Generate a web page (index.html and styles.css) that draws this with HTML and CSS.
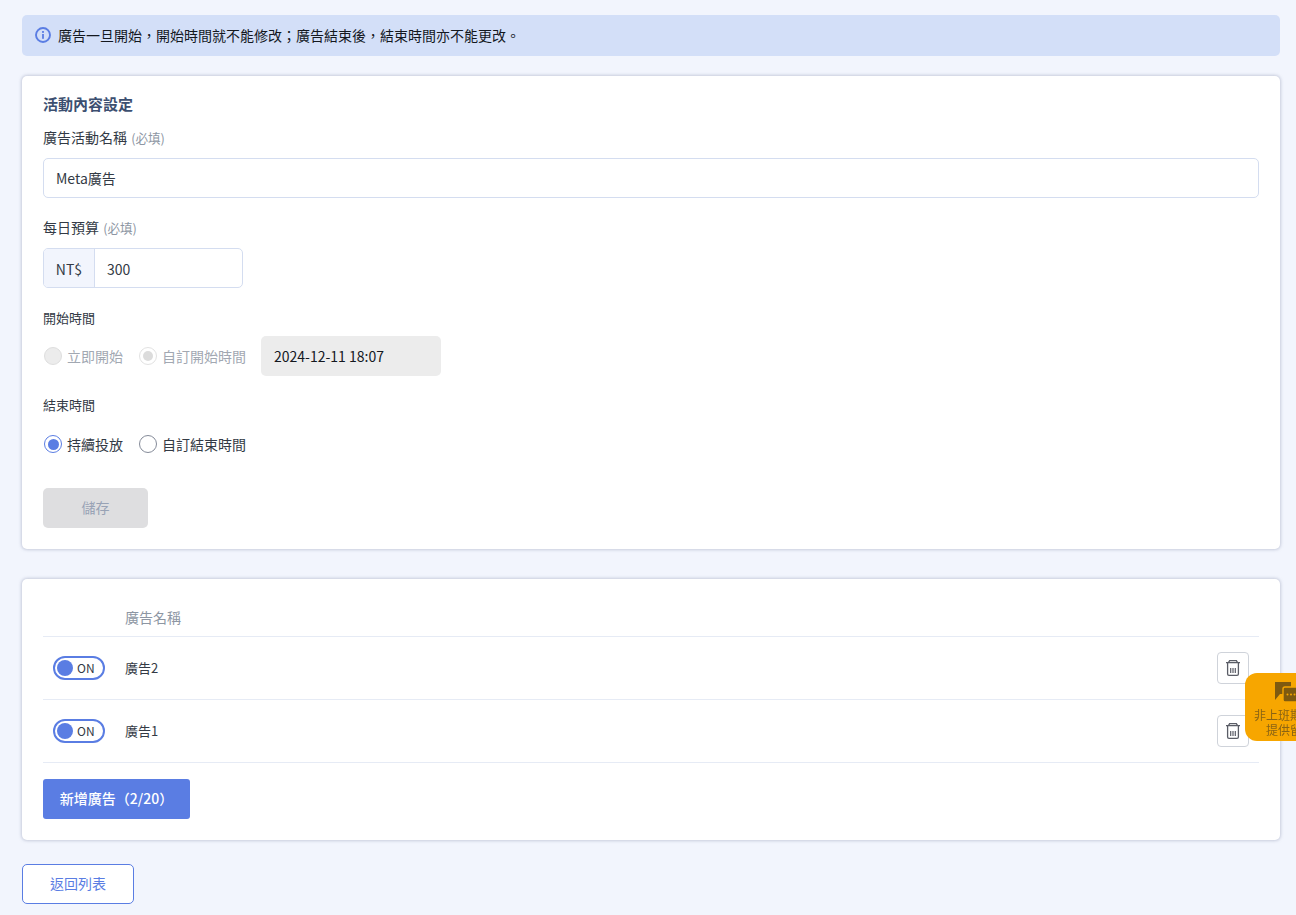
FILE: index.html
```html
<!DOCTYPE html>
<html lang="zh-Hant">
<head>
<meta charset="utf-8">
<title>Meta廣告</title>
<link rel="stylesheet" href="styles.css">
</head>
<body>
<main class="page">
  <div class="alert">
    <svg class="alert-icon" viewBox="0 0 16 16" width="16" height="16"><circle cx="8" cy="8" r="7" fill="none" stroke="#5a7de3" stroke-width="1.9"/><rect x="7.1" y="7" width="1.8" height="4.8" fill="#5a7de3"/><rect x="7.1" y="4" width="1.8" height="1.9" fill="#5a7de3"/></svg>
    <span>廣告一旦開始，開始時間就不能修改；廣告結束後，結束時間亦不能更改。</span>
  </div>

  <section class="card settings">
    <h2 class="card-title">活動內容設定</h2>
    <div class="label first tight">廣告活動名稱 <small>(必填)</small></div>
    <div class="input">Meta廣告</div>

    <div class="label tight">每日預算 <small>(必填)</small></div>
    <div class="money">
      <span class="addon">NT$</span>
      <span class="money-value">300</span>
    </div>

    <div class="label minor">開始時間</div>
    <div class="radios">
      <label class="radio disabled"><span class="dot"></span>立即開始</label>
      <label class="radio disabled checked"><span class="dot"></span>自訂開始時間</label>
      <div class="date">2024-12-11 18:07</div>
    </div>

    <div class="label minor tight">結束時間</div>
    <div class="radios">
      <label class="radio checked"><span class="dot"></span>持續投放</label>
      <label class="radio"><span class="dot"></span>自訂結束時間</label>
    </div>

    <button class="btn-save" type="button">儲存</button>
  </section>

  <section class="card ads">
    <div class="ads-head">廣告名稱</div>
    <div class="ad-row">
      <span class="toggle"><span class="knob"></span>ON</span>
      <span class="ad-name">廣告2</span>
      <button class="trash" type="button" aria-label="刪除">
        <svg viewBox="0 0 14 16" width="14" height="16"><path d="M0 2.7h14M2.6 2.4 3.6.7h6.8l1 1.7M1.6 3v10.9c0 .9.6 1.4 1.4 1.4h8c.8 0 1.4-.5 1.4-1.4V3" fill="none" stroke="#5a5d66" stroke-width="1.3"/><path d="M4.7 8v5M7 8v5M9.3 8v5" stroke="#5a5d66" stroke-width="1.2"/></svg>
      </button>
    </div>
    <div class="ad-row">
      <span class="toggle"><span class="knob"></span>ON</span>
      <span class="ad-name">廣告1</span>
      <button class="trash" type="button" aria-label="刪除">
        <svg viewBox="0 0 14 16" width="14" height="16"><path d="M0 2.7h14M2.6 2.4 3.6.7h6.8l1 1.7M1.6 3v10.9c0 .9.6 1.4 1.4 1.4h8c.8 0 1.4-.5 1.4-1.4V3" fill="none" stroke="#5a5d66" stroke-width="1.3"/><path d="M4.7 8v5M7 8v5M9.3 8v5" stroke="#5a5d66" stroke-width="1.2"/></svg>
      </button>
    </div>
    <button class="btn-add" type="button">新增廣告（2/20）</button>
  </section>

  <button class="btn-back" type="button">返回列表</button>
</main>

<aside class="help">
  <svg class="help-icon" viewBox="0 0 26 21" width="26" height="21"><path d="M0 0h16v12H5l-5 6z" fill="#7e5a10"/><rect x="8" y="5" width="18" height="15" rx="2" fill="#7e5a10" stroke="#f7a600" stroke-width="1.4"/><circle cx="12.5" cy="12.5" r="1" fill="#f7a600"/><circle cx="16" cy="12.5" r="1" fill="#f7a600"/><circle cx="19.5" cy="12.5" r="1" fill="#f7a600"/></svg>
  <div class="help-text">非上班期間僅<br>提供留言</div>
</aside>
</body>
</html>
```

FILE: styles.css
```css
* { box-sizing: border-box; }
html, body { margin: 0; height: 915px; overflow: hidden; }
body {
  background: #f2f5fd;
  font-family: "Noto Sans CJK TC", "Noto Sans", sans-serif;
  font-size: 14px;
  line-height: 20px;
  color: #333a45;
}
.page { padding: 15px 16px 0 22px; }

.alert {
  height: 41px;
  display: flex;
  align-items: center;
  gap: 7px;
  padding: 0 14px 2px 13px;
  background: #d3dff8;
  border-radius: 5px;
  color: #14181f;
}
.alert-icon { flex: none; }

.card {
  background: #fff;
  border-radius: 5px;
  box-shadow: 0 0 3px 1px rgba(120, 130, 160, .35);
  padding: 18px 21px 20px;
}
.settings { margin-top: 20px; height: 473px; }
.card-title {
  margin: 0;
  font-size: 15px;
  line-height: 20px;
  font-weight: 700;
  color: #3c4f70;
}
.label { margin-top: 20px; height: 20px; }
.label.first { margin-top: 14px; }
.label.tight { line-height: 18px; }
.label.minor { font-size: 13px; }
.label small { margin-left: 1px; font-size: 12.6px; color: #8d96a3; }

.input, .money {
  margin-top: 10px;
  height: 40px;
  background: #fff;
  border: 1px solid #d4ddf0;
  border-radius: 5px;
}
.input { display: flex; align-items: center; padding: 0 12px; }
.money { display: flex; width: 200px; overflow: hidden; }
.addon {
  width: 51px;
  display: flex;
  align-items: center;
  justify-content: center;
  padding-top: 2px;
  background: #f2f5fd;
  border-right: 1px solid #d4ddf0;
}
.money-value { display: flex; align-items: center; padding: 2px 0 0 12px; }

.radios { margin-top: 8px; height: 40px; display: flex; align-items: center; }
.radio { display: flex; align-items: center; gap: 5px; margin: 0 15px 0 1px; }
.radio + .radio { margin-left: 0; }
.radio + .radio .dot { margin-left: 1px; }
.dot {
  width: 18px;
  height: 18px;
  border-radius: 50%;
  border: 1px solid #858b99;
  background: #fff;
  position: relative;
  flex: none;
}
.radio.checked .dot { border-color: #5a7de3; border-width: 1.5px; }
.radio.checked .dot::after {
  content: "";
  position: absolute;
  inset: 2.5px;
  border-radius: 50%;
  background: #5a7de3;
}
.radio.disabled { color: #a2a8b2; }
.radio.disabled .dot { background: #ececec; border: 1px solid #dedede; }
.radio.disabled.checked .dot { background: #fff; border: 1px solid #e2e2e2; }
.radio.disabled.checked .dot::after { inset: 3px; background: #dcdcdc; }
.date {
  width: 180px;
  height: 40px;
  display: flex;
  align-items: center;
  padding-left: 13px;
  background: #ececec;
  border-radius: 5px;
  color: #14181f;
}

.btn-save {
  display: block;
  margin-top: 24px;
  width: 105px;
  height: 40px;
  padding: 0 0 2px;
  border: 0;
  border-radius: 5px;
  background: #dedee0;
  color: #98a2b5;
  font: inherit;
}

.ads { margin-top: 30px; height: 261px; padding-top: 20px; }
.ads-head {
  height: 38px;
  padding: 8px 0 0 82px;
  border-bottom: 1px solid #e6ebf5;
  color: #8d96a3;
}
.ad-row {
  height: 63px;
  display: flex;
  align-items: center;
  padding: 0 10px;
  border-bottom: 1px solid #e6ebf5;
}
.toggle {
  width: 52px;
  height: 24px;
  display: flex;
  align-items: center;
  gap: 4px;
  padding: 0 2px;
  border: 2px solid #5a7de3;
  border-radius: 12px;
  font-size: 12px;
  flex: none;
}
.knob { width: 16px; height: 16px; border-radius: 50%; background: #5a7de3; flex: none; }
.ad-name { margin-left: 20px; flex: 1; font-size: 13px; }
.trash {
  width: 32px;
  height: 32px;
  padding: 0;
  display: flex;
  align-items: center;
  justify-content: center;
  background: #fff;
  border: 1px solid #cfd3da;
  border-radius: 4px;
}
.btn-add {
  display: block;
  margin-top: 16px;
  width: 147px;
  height: 40px;
  padding: 0 0 2px;
  border: 0;
  border-radius: 3px;
  background: #5a7de3;
  color: #fff;
  font: inherit;
  font-weight: 500;
}
.btn-back {
  display: block;
  margin-top: 24px;
  width: 112px;
  height: 40px;
  padding: 0 0 2px;
  background: #fff;
  border: 1px solid #5a7de3;
  border-radius: 5px;
  color: #5a7de3;
  font: inherit;
}

.help {
  position: fixed;
  left: 1245px;
  top: 673px;
  width: 90px;
  height: 68px;
  background: #f7a600;
  border-radius: 12px;
  color: #8a6414;
  font-size: 12px;
  line-height: 15px;
  text-align: center;
  padding-top: 9px;
}
.help-icon { display: block; margin: 0 0 4px 30px; }
.help-text { white-space: nowrap; }
```
